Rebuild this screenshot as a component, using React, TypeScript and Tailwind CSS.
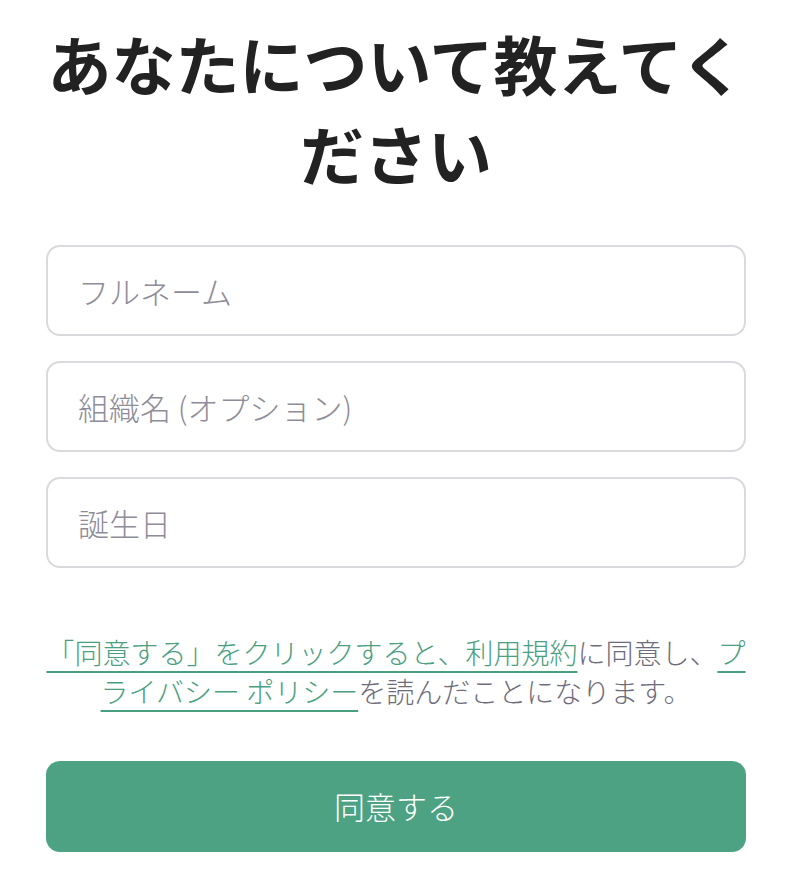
import React from "react";

export default function App() {
  const font = { fontFamily: '"Noto Sans CJK JP", "Noto Sans", sans-serif' };
  return (
    <div className="w-[792px] h-[886px] bg-white px-[46px] overflow-hidden" style={font}>
      <h1 className="pt-[17px] text-center text-[64px] leading-[90px] font-bold text-[#222222] -mx-[10px]">
        あなたについて教えてく<br />ださい
      </h1>
      <div className="mt-[48px] flex flex-col gap-[25px]">
        {["フルネーム", "組織名 (オプション)", "誕生日"].map((p) => (
          <input
            key={p}
            placeholder={p}
            className="h-[91px] w-full rounded-[14px] border-2 border-[#d9d9de] px-[30px] text-[31px] font-light text-[#222] placeholder:text-[#8e8c99] outline-none"
          />
        ))}
      </div>
      <p className="mt-[65px] -mx-[4px] text-center text-[28px] leading-[39px] font-light text-[#6e6c7a]">
        <span className="text-[#4a9f7f] underline decoration-2 underline-offset-[7px]">「同意する」をクリックすると、利用規約</span>に同意し、<span className="text-[#4a9f7f] underline decoration-2 underline-offset-[7px]">プライバシー ポリシー</span>を読んだことになります。
      </p>
      <button className="mt-[50px] h-[91px] w-full rounded-[14px] bg-[#4ca282] text-[31px] font-light text-white">
        同意する
      </button>
    </div>
  );
}
